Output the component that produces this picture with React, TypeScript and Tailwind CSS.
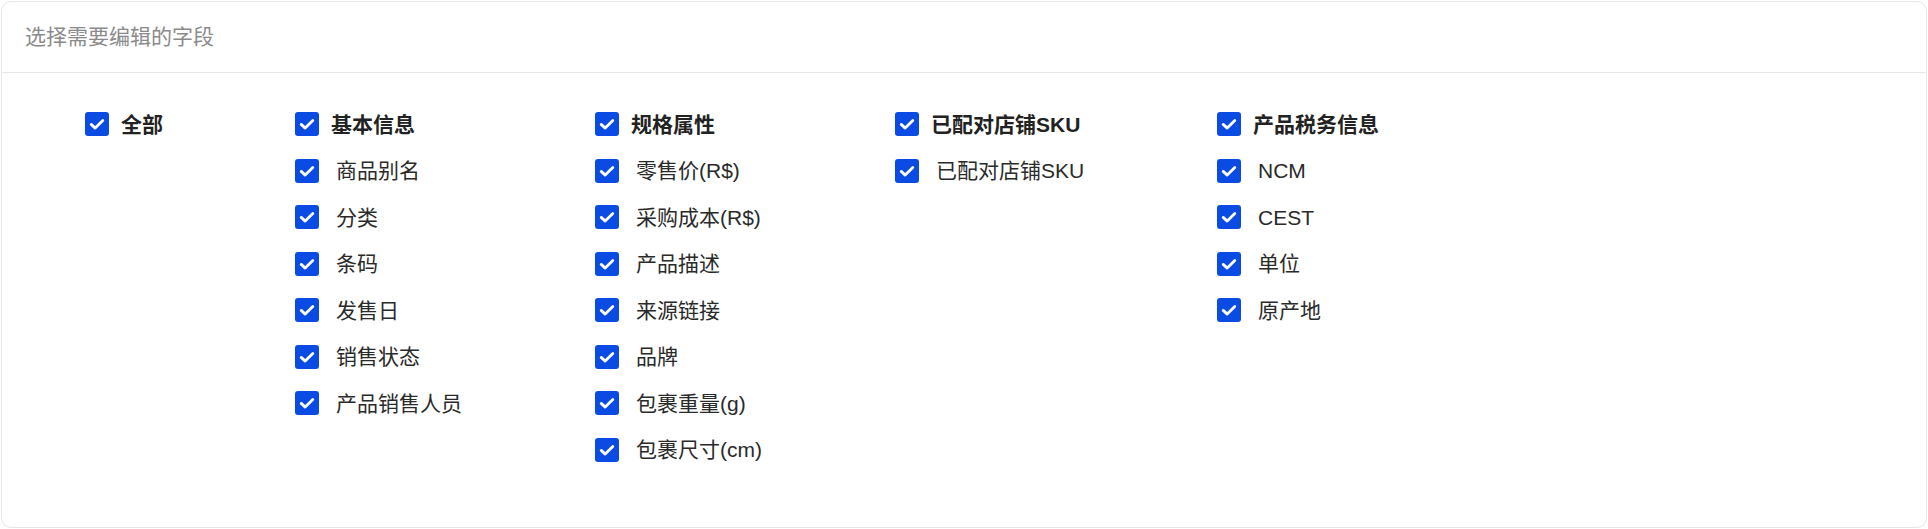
import React from "react";

type Group = { title: string; items: string[]; width: string };

const groups: Group[] = [
  { title: "基本信息", items: ["商品别名", "分类", "条码", "发售日", "销售状态", "产品销售人员"], width: "w-[300px]" },
  { title: "规格属性", items: ["零售价(R$)", "采购成本(R$)", "产品描述", "来源链接", "品牌", "包裹重量(g)", "包裹尺寸(cm)"], width: "w-[300px]" },
  { title: "已配对店铺SKU", items: ["已配对店铺SKU"], width: "w-[322px]" },
  { title: "产品税务信息", items: ["NCM", "CEST", "单位", "原产地"], width: "w-[300px]" },
];

function Box() {
  return (
    <span className="flex h-[24px] w-[24px] shrink-0 items-center justify-center rounded-[3px] bg-[#0a4be3]">
      <svg width="24" height="24" viewBox="0 0 24 24" fill="none">
        <path d="M6.2 12.4 L10.2 16.1 L17.8 8.6" stroke="white" strokeWidth="2.8" strokeLinecap="round" strokeLinejoin="round" />
      </svg>
    </span>
  );
}

function Row({ label, bold }: { label: string; bold?: boolean }) {
  return (
    <div className="flex h-[46.5px] items-center">
      <Box />
      <span
        className={
          bold
            ? "ml-[12px] text-[21px] font-bold text-[#222]"
            : "ml-[17px] text-[21px] text-[#2a2a2a]"
        }
      >
        {label}
      </span>
    </div>
  );
}

export default function App() {
  return (
    <div
      className="h-[529px] w-[1928px] bg-white p-px"
      style={{ fontFamily: '"Liberation Sans", "Noto Sans CJK SC", sans-serif' }}
    >
      <div className="flex h-[527px] flex-col rounded-[10px] border border-[#e6e6e6] bg-white">
        <div className="flex h-[71px] items-center border-b border-[#e8e8e8] pl-[23px] text-[21px] text-[#8a8a8a]">
          选择需要编辑的字段
        </div>
        <div className="flex pl-[83px] pt-[28px]">
          <div className="w-[210px]">
            <Row label="全部" bold />
          </div>
          {groups.map((g) => (
            <div key={g.title} className={g.width}>
              <Row label={g.title} bold />
              {g.items.map((it) => (
                <Row key={it} label={it} />
              ))}
            </div>
          ))}
        </div>
      </div>
    </div>
  );
}
